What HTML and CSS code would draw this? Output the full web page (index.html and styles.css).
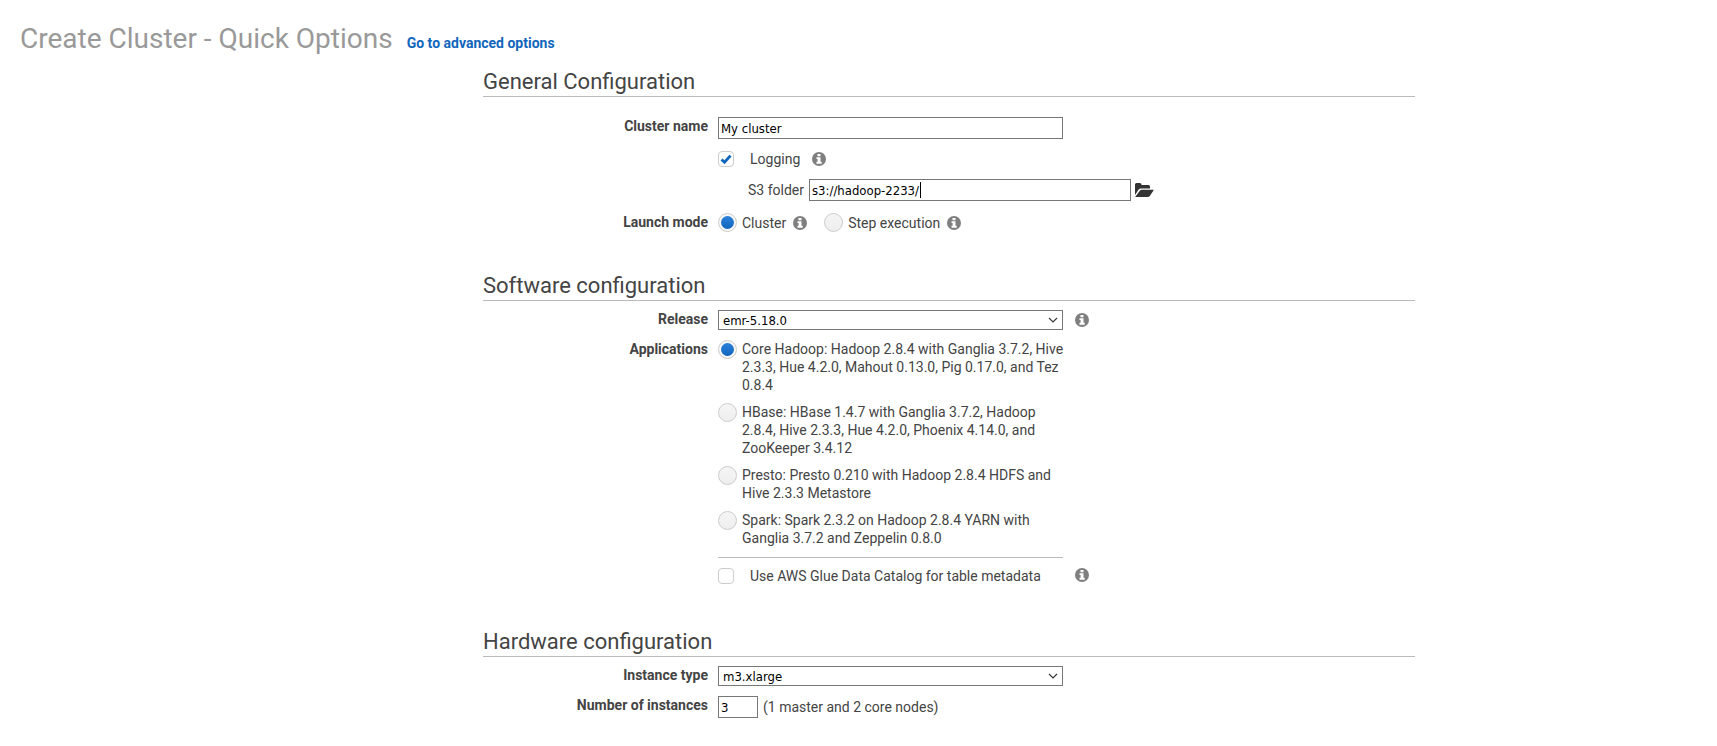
FILE: index.html
```html
<!DOCTYPE html>
<html lang="en">
<head>
<meta charset="utf-8">
<title>Create Cluster - Quick Options</title>
<link rel="stylesheet" href="styles.css">
</head>
<body>
<svg class="sprite" aria-hidden="true">
  <symbol id="info" viewBox="0 0 14 14">
    <circle cx="7" cy="7" r="7" fill="#7f7f7f"/>
    <path d="M5.500 2h3v2.300h-3zM4.500 5.300h4v4.500h1.200v1.900H4.500V9.800h1.100V7.100H4.500z" fill="#fff"/>
  </symbol>
  <symbol id="chevron" viewBox="0 0 10 6">
    <path d="M1 1l4 4 4-4" fill="none" stroke="#333" stroke-width="1.100"/>
  </symbol>
</svg>
<header class="page-header">
  <h1 class="page-title">Create Cluster - Quick Options</h1>
  <a class="advanced-link" href="#">Go to advanced options</a>
</header>
<form class="form">
  <section class="section general">
    <h2 class="section-title">General Configuration</h2>
    <div class="row">
      <label class="label" for="name">Cluster name</label>
      <div class="field"><input class="text main" id="name" type="text" value="My cluster"></div>
    </div>
    <div class="row">
      <div class="field">
        <span class="check-wrap">
          <input class="check" type="checkbox" id="logging" checked>
          <svg class="tick" viewBox="0 0 12 12"><path d="M1.500 6.500l3 2.800L10.500 2.600" fill="none" stroke="#1166bb" stroke-width="2.900"/></svg>
        </span>
        <label for="logging" class="check-label">Logging</label>
        <svg class="info after-check"><use href="#info"/></svg>
      </div>
    </div>
    <div class="row">
      <div class="field folder-field">
        <label for="folder">S3 folder</label>
        <span class="folder-wrap"><input class="text folder" id="folder" type="text" value="s3://hadoop-2233/"><span class="caret"></span></span>
        <svg class="folder-icon" viewBox="0 0 20 16">
          <path d="M1 13V2.500Q1 1 2.500 1H6Q7.500 1 7.500 2.500V3H14.500Q16 3 16 4.500V6.500H7Q5.500 6.500 4.500 7.800Z" fill="#333"/>
          <path d="M1.200 15L6 8.600Q6.600 7.800 7.700 7.800H19.200Q20 7.800 19.500 8.600L15.600 14.200Q15 15 14 15Z" fill="#333"/>
        </svg>
      </div>
    </div>
    <div class="row">
      <span class="label">Launch mode</span>
      <div class="field">
        <input class="radio" type="radio" name="mode" id="m1" checked>
        <label for="m1" class="radio-label">Cluster</label>
        <svg class="info near"><use href="#info"/></svg>
        <input class="radio second" type="radio" name="mode" id="m2">
        <label for="m2" class="radio-label">Step execution</label>
        <svg class="info near"><use href="#info"/></svg>
      </div>
    </div>
  </section>

  <section class="section software">
    <h2 class="section-title">Software configuration</h2>
    <div class="row">
      <label class="label" for="release">Release</label>
      <div class="field">
        <span class="select-wrap main"><select class="select" id="release"><option>emr-5.18.0</option></select><svg class="chevron"><use href="#chevron"/></svg></span>
        <svg class="info far"><use href="#info"/></svg>
      </div>
    </div>
    <div class="row">
      <span class="label">Applications</span>
      <div class="options">
        <div class="option"><input class="radio" type="radio" name="app" id="a1" checked><label for="a1">Core Hadoop: Hadoop 2.8.4 with Ganglia 3.7.2, Hive 2.3.3, Hue 4.2.0, Mahout 0.13.0, Pig 0.17.0, and Tez 0.8.4</label></div>
        <div class="option"><input class="radio" type="radio" name="app" id="a2"><label for="a2">HBase: HBase 1.4.7 with Ganglia 3.7.2, Hadoop 2.8.4, Hive 2.3.3, Hue 4.2.0, Phoenix 4.14.0, and ZooKeeper 3.4.12</label></div>
        <div class="option"><input class="radio" type="radio" name="app" id="a3"><label for="a3">Presto: Presto 0.210 with Hadoop 2.8.4 HDFS and Hive 2.3.3 Metastore</label></div>
        <div class="option"><input class="radio" type="radio" name="app" id="a4"><label for="a4">Spark: Spark 2.3.2 on Hadoop 2.8.4 YARN with Ganglia 3.7.2 and Zeppelin 0.8.0</label></div>
      </div>
    </div>
    <div class="row">
      <div class="catalog">
        <div class="catalog-main main">
          <input class="check" type="checkbox" id="glue">
          <label for="glue" class="check-label">Use AWS Glue Data Catalog for table metadata</label>
        </div>
        <svg class="info far"><use href="#info"/></svg>
      </div>
    </div>
  </section>

  <section class="section hardware">
    <h2 class="section-title">Hardware configuration</h2>
    <div class="row">
      <label class="label" for="type">Instance type</label>
      <div class="field">
        <span class="select-wrap main"><select class="select" id="type"><option>m3.xlarge</option></select><svg class="chevron"><use href="#chevron"/></svg></span>
      </div>
    </div>
    <div class="row">
      <label class="label" for="count">Number of instances</label>
      <div class="field"><input class="text count" id="count" type="text" value="3"><span class="hint">(1 master and 2 core nodes)</span></div>
    </div>
  </section>
</form>
</body>
</html>
```
FILE: styles.css
```css
* { box-sizing: border-box; }
body {
  margin: 0;
  padding: 22px 20px 24px;
  background: #fff;
  color: #444;
  font: 14px/18px Roboto, "Liberation Sans", sans-serif;
}
.sprite { position: absolute; width: 0; height: 0; }
.page-header { display: flex; align-items: baseline; gap: 14px; }
.page-title { margin: 0; font-size: 28px; line-height: 34px; font-weight: 400; color: #999; }
.advanced-link { color: #1166bb; font-weight: 700; text-decoration: none; }
.form { max-width: 932px; margin: 12px 0 0 463px; }
.section { display: flex; flex-direction: column; margin-bottom: 40px; }
.general { gap: 12px; }
.software, .hardware { gap: 10px; }
.software { margin-bottom: 44px; }
.section-title {
  margin: 0 0 -1px;
  border-bottom: 1px solid #bbb;
  font-size: 22px;
  line-height: 28px;
  font-weight: 400;
}
.general .section-title { margin-bottom: 8px; }
.row { display: grid; grid-template-columns: 225px minmax(0, 1fr); column-gap: 10px; align-items: start; }
.row > :last-child { grid-column: 2; }
.label { text-align: right; font-weight: 700; }
.field { display: flex; align-items: center; }
.main { width: 345px; }
.text, .select {
  height: 22px;
  margin: 0;
  padding: 0 2px;
  border: 1px solid #777;
  border-radius: 0;
  background: #fff;
  color: #000;
  font: 13px "DejaVu Sans Condensed", "Noto Sans", sans-serif;
}
.select { appearance: none; display: block; width: 100%; height: 20px; padding: 0 4px; }
.select-wrap { position: relative; }
.chevron { position: absolute; right: 5px; top: 7px; width: 10px; height: 6px; }
.check {
  appearance: none;
  display: block;
  flex: none;
  width: 16px;
  height: 16px;
  margin: 0;
  border: 1px solid #ccc;
  border-radius: 4px;
  background: #fff;
}
.check-wrap { position: relative; }
.tick { position: absolute; left: 2px; top: 2px; width: 12px; height: 12px; pointer-events: none; }
.check-label { margin: -1px 0 -1px 16px; }
.info { flex: none; width: 14px; height: 14px; }
.after-check { margin-left: 12px; }
.near { margin-left: 7px; }
.far { margin-left: 12px; }
.folder-field { padding-left: 30px; }
.folder-wrap { position: relative; margin: 0 3px 0 5px; }
.folder { display: block; width: 322px; }
.caret { position: absolute; left: 111px; top: 3px; width: 1px; height: 16px; background: #000; }
.folder-icon { width: 20px; height: 16px; }
.radio {
  appearance: none;
  flex: none;
  width: 19px;
  height: 19px;
  margin: 0;
  border: 1px solid #ccc;
  border-radius: 50%;
  background: linear-gradient(#f5f5f5, #eee);
}
.radio:checked { padding: 2px; background: #f8f8f8; }
.radio:checked::before {
  content: "";
  display: block;
  width: 13px;
  height: 13px;
  border-radius: 50%;
  background: linear-gradient(#2b80dc, #1166bb);
}
.radio-label { margin-left: 5px; }
.second { margin-left: 17px; }
.options { display: flex; flex-direction: column; gap: 9px; max-width: 350px; }
.option { display: flex; align-items: flex-start; gap: 5px; }
.catalog { display: flex; align-items: flex-end; }
.catalog .info { margin-bottom: 2px; }
.catalog-main { display: flex; align-items: center; padding-top: 10px; border-top: 1px solid #bbb; }
.count { width: 40px; }
.hint { margin-left: 5px; }
```
